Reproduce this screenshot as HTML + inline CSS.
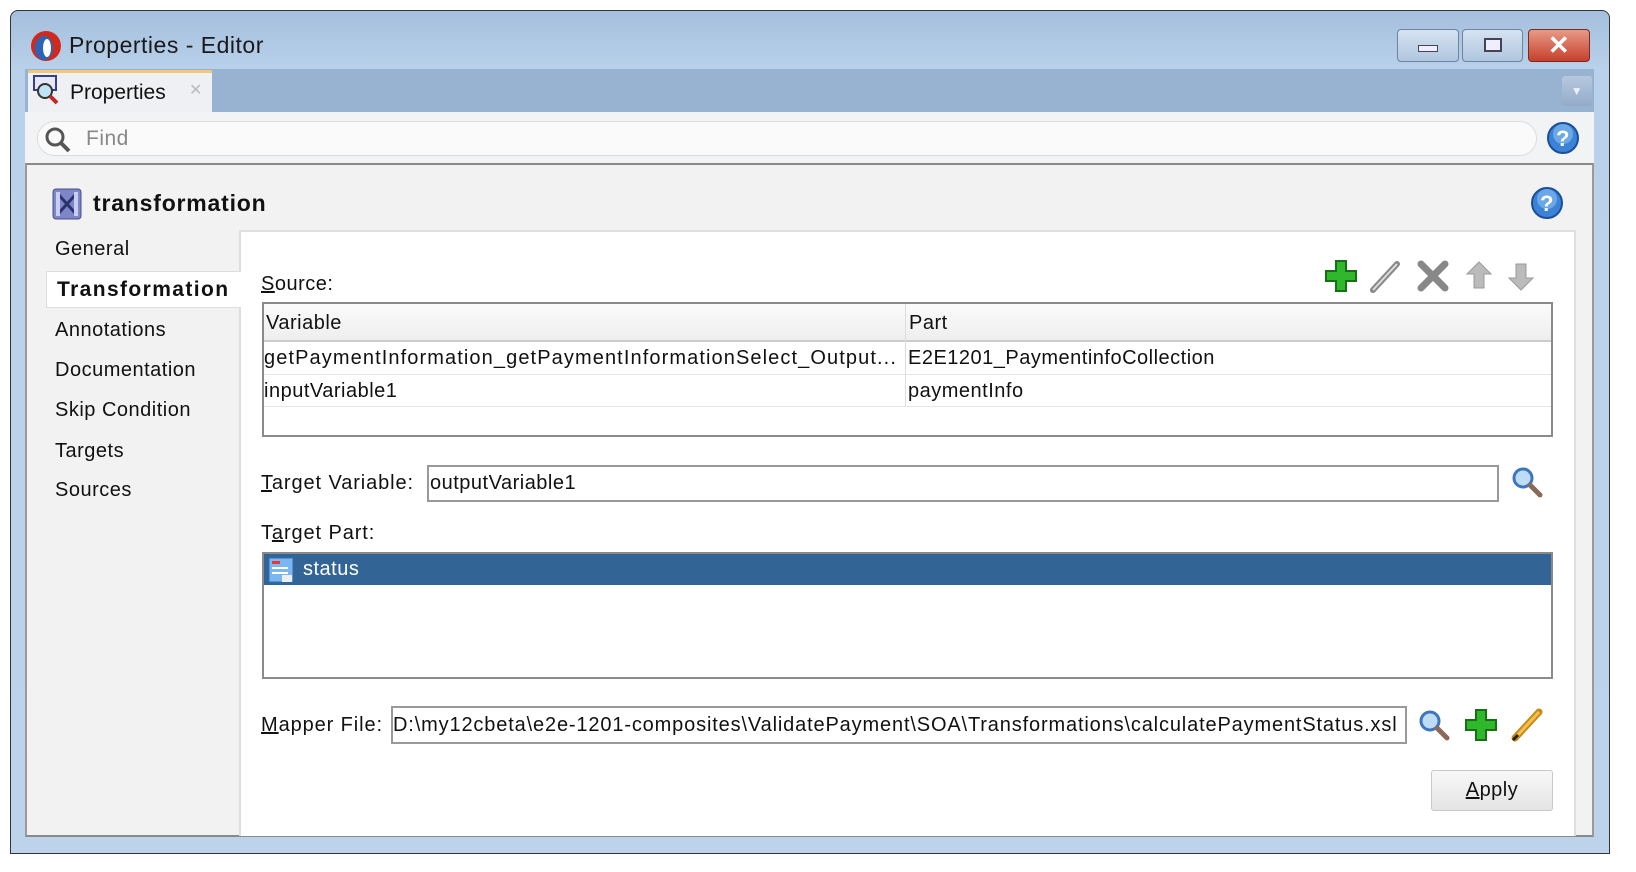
<!DOCTYPE html>
<html><head><meta charset="utf-8"><style>
*{box-sizing:border-box;margin:0;padding:0}
body{width:1636px;height:872px;background:#fff;position:relative;overflow:hidden;font-family:"Liberation Sans",sans-serif;color:#111;font-size:20px;letter-spacing:.5px}
.a{position:absolute}
.win{left:10px;top:10px;width:1600px;height:844px;border:1px solid #333;border-radius:8px 8px 0 0;background:linear-gradient(#a5bfdd,#b9d1ea 60px,#bcd3eb);}
.u{text-decoration:underline}
.t{white-space:nowrap}
</style></head><body>
<div class="a win"></div>
<!-- title -->
<svg class="a" style="left:29px;top:29px" width="34" height="34" viewBox="0 0 34 34"><circle cx="17" cy="17" r="15" fill="#d02a1f"/><ellipse cx="15" cy="19" rx="9" ry="12" fill="#2a63b8"/><ellipse cx="18" cy="19" rx="4" ry="9" fill="#fff"/></svg>
<div class="a t" style="left:69px;top:32px;font-size:23px;color:#1a1a1a">Properties - Editor</div>
<div class="a" style="left:1397px;top:29px;width:62px;height:33px;border:1px solid #6d83a0;border-radius:4px;background:linear-gradient(#d6e3f1,#b0c6df)"><div class="a" style="left:20px;top:15px;width:20px;height:7px;background:#eef;border:1px solid #445"></div></div>
<div class="a" style="left:1462px;top:29px;width:61px;height:33px;border:1px solid #6d83a0;border-radius:4px;background:linear-gradient(#d6e3f1,#b0c6df)"><div class="a" style="left:21px;top:8px;width:18px;height:14px;background:#eef;border:2px solid #445"></div></div>
<div class="a" style="left:1528px;top:29px;width:62px;height:33px;border:1px solid #7a2a20;border-radius:4px;background:linear-gradient(#e79a86,#c6402c);color:#fff;font-size:26px;font-weight:bold;text-align:center;line-height:30px">✕</div>
<!-- tab row -->
<div class="a" style="left:25px;top:69px;width:1569px;height:43px;background:#98b3d2"></div>
<div class="a" style="left:28px;top:70px;width:184px;height:42px;background:#eef0f3;border-top:3px solid #f2c77a"></div>
<svg class="a" style="left:32px;top:74px" width="30" height="32" viewBox="0 0 30 32"><rect x="2" y="2" width="22" height="14" fill="#e6e8f8" stroke="#3a3e8a" stroke-width="2"/><circle cx="13" cy="17" r="7" fill="#bfe4f4" stroke="#333" stroke-width="2"/><path d="M18 22 L25 29" stroke="#c0282a" stroke-width="4"/></svg>
<div class="a t" style="left:70px;top:81px;font-size:21px;letter-spacing:0">Properties</div>
<div class="a" style="left:189px;top:80px;color:#bbb;font-size:16px">✕</div>
<div class="a" style="left:1562px;top:76px;width:30px;height:30px;border-radius:3px;background:linear-gradient(#b6c8de,#94abc8);color:#eef;font-size:12px;text-align:center;line-height:30px">▼</div>
<!-- find row -->
<div class="a" style="left:25px;top:112px;width:1569px;height:51px;background:#f2f3f5"></div>
<div class="a" style="left:37px;top:121px;width:1500px;height:35px;border:1px solid #dcdcdc;border-radius:18px;background:#fafafa"></div>
<svg class="a" style="left:44px;top:126px" width="28" height="28" viewBox="0 0 28 28"><circle cx="11" cy="11" r="8" fill="none" stroke="#555" stroke-width="3"/><path d="M17 17 L25 25" stroke="#555" stroke-width="4"/></svg>
<div class="a t" style="left:86px;top:127px;color:#888;font-size:21px">Find</div>
<svg class="a" style="left:1546px;top:121px" width="34" height="34"><circle cx="17" cy="17" r="15" fill="#3b83d6" stroke="#1b4f9a" stroke-width="2"/><circle cx="17" cy="13" r="10" fill="#8dc2f0" opacity=".6"/><text x="17" y="25" font-family="Liberation Sans" font-weight="bold" font-size="22" fill="#fff" text-anchor="middle">?</text></svg>
<!-- main panel -->
<div class="a" style="left:25px;top:163px;width:1569px;height:674px;background:#f2f2f2;border-top:2px solid #8a8a8a;border-left:2px solid #9a9a9a;border-right:2px solid #9a9a9a;border-bottom:2px solid #8a8a8a"></div>
<svg class="a" style="left:52px;top:188px" width="30" height="32"><rect x="1" y="1" width="28" height="30" rx="3" fill="#7d86c6" stroke="#4a4f8a"/><path d="M6 6 L24 26 M24 6 L6 26" stroke="#2c3270" stroke-width="3"/><rect x="4" y="4" width="4" height="24" fill="#c8cef0"/><rect x="22" y="4" width="4" height="24" fill="#c8cef0"/></svg>
<div class="a t" style="left:93px;top:190px;font-size:23px;font-weight:bold;letter-spacing:.8px">transformation</div>
<svg class="a" style="left:1530px;top:186px" width="34" height="34"><circle cx="17" cy="17" r="15" fill="#3b83d6" stroke="#1b4f9a" stroke-width="2"/><circle cx="17" cy="13" r="10" fill="#8dc2f0" opacity=".6"/><text x="17" y="25" font-family="Liberation Sans" font-weight="bold" font-size="22" fill="#fff" text-anchor="middle">?</text></svg>
<!-- content area -->
<div class="a" style="left:239px;top:230px;width:1337px;height:606px;background:#fff;border-left:2px solid #dedede;border-top:2px solid #dedede;border-right:2px solid #dedede"></div>
<div class="a" style="left:46px;top:271px;width:195px;height:37px;background:#fff;border:1px solid #ddd;border-right:none"></div>
<div class="a t" style="left:55px;top:238px">General</div>
<div class="a t" style="left:57px;top:278px;font-weight:bold;font-size:21px;letter-spacing:1.4px">Transformation</div>
<div class="a t" style="left:55px;top:319px">Annotations</div>
<div class="a t" style="left:55px;top:359px">Documentation</div>
<div class="a t" style="left:55px;top:399px">Skip Condition</div>
<div class="a t" style="left:55px;top:440px">Targets</div>
<div class="a t" style="left:55px;top:479px">Sources</div>
<div class="a t" style="left:261px;top:273px"><span class="u">S</span>ource:</div>
<!-- toolbar -->
<svg class="a" style="left:1323px;top:258px" width="220" height="36" viewBox="0 0 220 36">
<path d="M13 3h10v10h10v10h-10v10h-10v-10h-10v-10h10z" fill="#2fb82c" stroke="#167014" stroke-width="2"/>
<path d="M50 32 L74 6" stroke="#888" stroke-width="6" stroke-linecap="round"/><path d="M50 32 L74 6" stroke="#ddd" stroke-width="2"/>
<path d="M98 6 L122 30 M122 6 L98 30" stroke="#888" stroke-width="7" stroke-linecap="round"/>
<path d="M156 4 L168 16 h-7 v14 h-10 v-14 h-7z" fill="#bbb" stroke="#999"/>
<path d="M198 32 L210 20 h-7 v-14 h-10 v14 h-7z" fill="#bbb" stroke="#999"/>
</svg>
<!-- table -->
<div class="a" style="left:262px;top:302px;width:1291px;height:135px;border:2px solid #8a8a8a;background:#fff"></div>
<div class="a" style="left:264px;top:304px;width:1287px;height:38px;background:linear-gradient(#fbfbfb,#eee);border-bottom:2px solid #ccc"></div>
<div class="a" style="left:905px;top:304px;width:1px;height:102px;background:#ddd"></div>
<div class="a" style="left:264px;top:374px;width:1287px;height:1px;background:#e6e6e6"></div>
<div class="a" style="left:264px;top:406px;width:1287px;height:1px;background:#e6e6e6"></div>
<div class="a t" style="left:266px;top:312px">Variable</div>
<div class="a t" style="left:909px;top:312px">Part</div>
<div class="a t" style="left:264px;top:347px;letter-spacing:1.1px">getPaymentInformation_getPaymentInformationSelect_Output...</div>
<div class="a t" style="left:908px;top:347px">E2E1201_PaymentinfoCollection</div>
<div class="a t" style="left:264px;top:380px">inputVariable1</div>
<div class="a t" style="left:908px;top:380px">paymentInfo</div>
<!-- target variable -->
<div class="a t" style="left:261px;top:472px;letter-spacing:.9px"><span class="u">T</span>arget Variable:</div>
<div class="a" style="left:427px;top:465px;width:1072px;height:37px;border:2px solid #999;background:#fff"></div>
<div class="a t" style="left:430px;top:472px">outputVariable1</div>
<svg class="a" style="left:1510px;top:465px" width="34" height="34"><circle cx="13" cy="13" r="9" fill="#bfdcf7" stroke="#3d76c0" stroke-width="3"/><path d="M20 20 L30 30" stroke="#8a6a58" stroke-width="5" stroke-linecap="round"/></svg>
<div class="a t" style="left:261px;top:522px;letter-spacing:.9px">T<span class="u">a</span>rget Part:</div>
<div class="a" style="left:262px;top:552px;width:1291px;height:127px;border:2px solid #8a8a8a;background:#fff"></div>
<div class="a" style="left:264px;top:554px;width:1287px;height:31px;background:#326595"></div>
<svg class="a" style="left:268px;top:557px" width="26" height="26"><rect x="1" y="1" width="24" height="24" fill="#7ab7f0" stroke="#2f6cb8"/><rect x="4" y="4" width="8" height="3" fill="#e33"/><rect x="4" y="10" width="16" height="2" fill="#fff"/><rect x="4" y="15" width="16" height="2" fill="#fff"/><rect x="14" y="18" width="10" height="7" fill="#eee"/></svg>
<div class="a t" style="left:303px;top:558px;color:#fff">status</div>
<!-- mapper -->
<div class="a t" style="left:261px;top:714px;letter-spacing:.9px"><span class="u">M</span>apper File:</div>
<div class="a" style="left:391px;top:706px;width:1016px;height:38px;border:2px solid #999;background:#fff;overflow:hidden"></div>
<div class="a t" style="left:393px;top:714px;width:1010px;overflow:hidden;letter-spacing:.85px">D:\my12cbeta\e2e-1201-composites\ValidatePayment\SOA\Transformations\calculatePaymentStatus.xsl</div>
<svg class="a" style="left:1417px;top:708px" width="34" height="34"><circle cx="13" cy="13" r="9" fill="#bfdcf7" stroke="#3d76c0" stroke-width="3"/><path d="M20 20 L30 30" stroke="#8a6a58" stroke-width="5" stroke-linecap="round"/></svg>
<svg class="a" style="left:1463px;top:707px" width="36" height="36"><path d="M13 3h10v10h10v10h-10v10h-10v-10h-10v-10h10z" fill="#2fb82c" stroke="#167014" stroke-width="2"/></svg>
<svg class="a" style="left:1510px;top:707px" width="36" height="36"><path d="M5 31 L29 5" stroke="#c68a1c" stroke-width="7" stroke-linecap="round"/><path d="M5 31 L29 5" stroke="#f3c14a" stroke-width="3"/><path d="M3 33 L8 28" stroke="#222" stroke-width="3"/></svg>
<div class="a" style="left:1431px;top:770px;width:122px;height:41px;border:1px solid #c8c8c8;border-radius:3px;background:linear-gradient(#f8f8f8,#e4e4e4);text-align:center;line-height:38px"><span class="u">A</span>pply</div>
</body></html>
